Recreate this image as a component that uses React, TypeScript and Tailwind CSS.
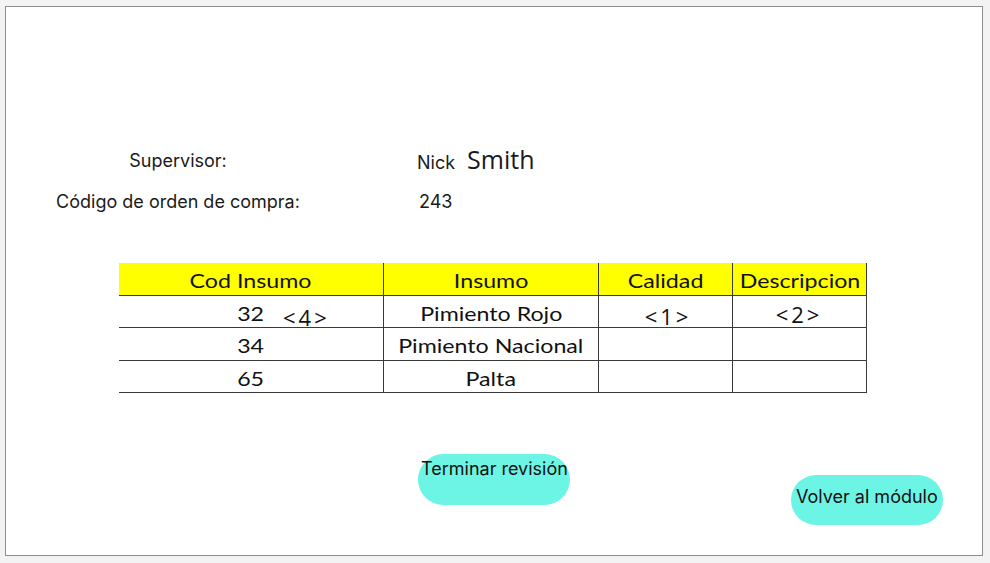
import React from "react";

type Fila = {
  cod: string;
  insumo: string;
  alto: string;
  calidad?: string;
  descripcion?: string;
  nota?: string;
};

const filas: Fila[] = [
  { cod: "32", insumo: "Pimiento Rojo", alto: "h-[32px]", calidad: "<1>", descripcion: "<2>", nota: "<4>" },
  { cod: "34", insumo: "Pimiento Nacional", alto: "h-[33px]" },
  { cod: "65", insumo: "Palta", alto: "h-[32px]" },
];

const encabezados = ["Cod Insumo", "Insumo", "Calidad", "Descripcion"];

const celda = "relative flex items-center justify-center border-b border-r border-[#3a3a3a] pt-[2px] text-[20px] text-[#111]";

// texto de la tabla (ancho como en la planilla)
const Txt = ({ children }: { children: React.ReactNode }) => (
  <span className="inline-block scale-x-[1.16] whitespace-nowrap">{children}</span>
);

const RevisionInsumos = () => {
  return (
    <div className="h-[563px] bg-[#f3f3f3] pl-[5px] pt-[6px] font-['Inter',sans-serif]">
      <div className="h-[550px] w-[978px] border border-[#8e8e8e] bg-white pt-[134px] text-[#1a1a1a]">
        {/* Datos del supervisor */}
        <div className="flex h-[38px] items-center">
          <div className="w-[344px] text-center text-[18px]">Supervisor:</div>
          <div className="ml-[67px] flex items-baseline gap-[12px]">
            <span className="text-[18px]">Nick</span>
            <span className="font-['Open_Sans',sans-serif] text-[25px]">Smith</span>
          </div>
        </div>
        <div className="mt-[10px] flex h-[24px] items-center">
          <div className="w-[344px] text-center text-[18px]">Código de orden de compra:</div>
          <div className="ml-[69px] text-[18px]">243</div>
        </div>

        {/* Tabla */}
        <div className="ml-[113px] mt-[50px] grid w-[748px] grid-cols-[265px_215px_134px_134px] font-['Lato',sans-serif]">
          {encabezados.map((h) => (
            <div key={h} className="flex h-[33px] items-center justify-center border-b border-r border-[#3a3a3a] bg-[#ffff00] pt-[1px] text-[20px] text-[#111]">
              <Txt>{h}</Txt>
            </div>
          ))}
          {filas.map((f) => (
            <React.Fragment key={f.cod}>
              <div className={`${celda} ${f.alto}`}>
                <Txt>{f.cod}</Txt>
                {f.nota && (
                  <span className="absolute left-[164px] top-[7px] font-['Open_Sans',sans-serif] text-[22px] leading-[28px] tracking-[3px] text-[#111]">{f.nota}</span>
                )}
              </div>
              <div className={`${celda} ${f.alto}`}>
                <Txt>{f.insumo}</Txt>
              </div>
              <div className={`${celda} ${f.alto}`}>
                {f.calidad && <span className="ml-[5px] mt-[8px] font-['Open_Sans',sans-serif] text-[22px] tracking-[3px] text-[#111]">{f.calidad}</span>}
              </div>
              <div className={`${celda} ${f.alto}`}>
                {f.descripcion && <span className="mr-[1px] mt-[4px] font-['Open_Sans',sans-serif] text-[22px] tracking-[3px] text-[#111]">{f.descripcion}</span>}
              </div>
            </React.Fragment>
          ))}
        </div>

        {/* Botones */}
        <div className="mt-[61px] flex items-start">
          <button className="ml-[412px] flex h-[51px] w-[152px] items-start rounded-full bg-[#6cf4e4] pl-[3px] pt-[1px] text-left text-[18px] whitespace-nowrap text-[#111]">
            Terminar revisión
          </button>
          <button className="ml-[221px] mt-[21px] flex h-[50px] w-[152px] items-center rounded-full bg-[#6cf4e4] pb-[8px] pl-[5px] text-left text-[18px] whitespace-nowrap text-[#111]">
            Volver al módulo
          </button>
        </div>
      </div>
    </div>
  );
};

export default function App() {
  return <RevisionInsumos />;
}
